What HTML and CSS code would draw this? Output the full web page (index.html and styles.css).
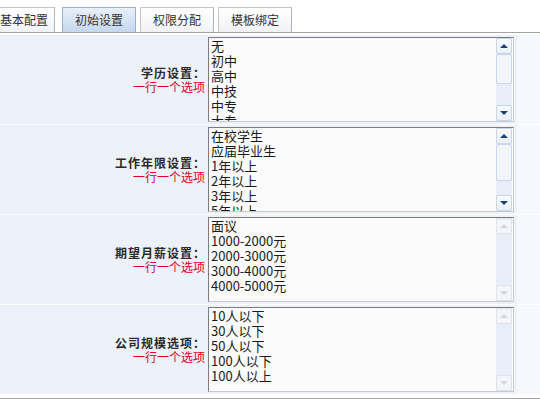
FILE: index.html
```html
<!DOCTYPE html>
<html lang="zh-CN">
<head>
<meta charset="utf-8">
<title>初始设置</title>
<link rel="stylesheet" href="styles.css">
</head>
<body>
<div class="tabs">
  <span class="tab first">基本配置</span>
  <span class="tab active">初始设置</span>
  <span class="tab">权限分配</span>
  <span class="tab">模板绑定</span>
</div>
<div class="form">
  <div class="row">
    <div class="label"><b>学历设置：</b><span class="tip">一行一个选项</span></div>
    <div class="field">
      <div class="listbox">
        <div class="items">
          <div>无</div><div>初中</div><div>高中</div><div>中技</div><div>中专</div><div>大专</div><div>本科</div><div>硕士</div><div>博士</div>
        </div>
        <div class="sb">
          <div class="btn up"></div>
          <div class="thumb t1"></div>
          <div class="track"></div>
          <div class="btn down"></div>
        </div>
      </div>
    </div>
    <div class="rest"></div>
  </div>
  <div class="row">
    <div class="label"><b>工作年限设置：</b><span class="tip">一行一个选项</span></div>
    <div class="field">
      <div class="listbox">
        <div class="items">
          <div>在校学生</div><div>应届毕业生</div><div>1年以上</div><div>2年以上</div><div>3年以上</div><div>5年以上</div><div>10年以上</div>
        </div>
        <div class="sb">
          <div class="btn up"></div>
          <div class="thumb t2"></div>
          <div class="track"></div>
          <div class="btn down"></div>
        </div>
      </div>
    </div>
    <div class="rest"></div>
  </div>
  <div class="row">
    <div class="label"><b>期望月薪设置：</b><span class="tip">一行一个选项</span></div>
    <div class="field">
      <div class="listbox">
        <div class="items">
          <div>面议</div><div>1000-2000元</div><div>2000-3000元</div><div>3000-4000元</div><div>4000-5000元</div>
        </div>
        <div class="sb off">
          <div class="btn up"></div>
          <div class="track"></div>
          <div class="btn down"></div>
        </div>
      </div>
    </div>
    <div class="rest"></div>
  </div>
  <div class="row">
    <div class="label"><b>公司规模选项：</b><span class="tip">一行一个选项</span></div>
    <div class="field">
      <div class="listbox">
        <div class="items">
          <div>10人以下</div><div>30人以下</div><div>50人以下</div><div>100人以下</div><div>100人以上</div>
        </div>
        <div class="sb off">
          <div class="btn up"></div>
          <div class="track"></div>
          <div class="btn down"></div>
        </div>
      </div>
    </div>
    <div class="rest"></div>
  </div>
</div>
<div class="bottom-line"></div>
</body>
</html>
```
FILE: styles.css
```css
html, body {
  margin: 0;
  padding: 0;
  background: #ffffff;
  font-family: "Noto Sans CJK SC", "Noto Sans", sans-serif;
  font-size: 12px;
  color: #222;
  overflow: hidden;
}

.tabs {
  display: flex;
  align-items: flex-end;
  padding-top: 7px;
  margin-left: -13px;
  border-bottom: 1px solid #a3a3a3;
  height: 25px;
}

.tab {
  box-sizing: border-box;
  height: 25px;
  line-height: 23px;
  padding: 0 12px;
  margin-right: 4px;
  border: 1px solid #c6c6c6;
  border-bottom: none;
  border-right-color: #aeb3b9;
  background: linear-gradient(#ffffff, #f1f2f4);
  color: #333;
  font-size: 12px;
  white-space: nowrap;
}

.tab.first {
  padding-right: 6px;
  margin-right: 7px;
}

.tab.active {
  background: linear-gradient(#e8f0fa, #c5d7ee);
  border-color: #97afd0;
}

.form {
  margin-top: 2px;
}

.row {
  display: grid;
  grid-template-columns: 206px 311px 1fr;
  border-bottom: 1px solid #ffffff;
  background: #edf2fa;
}

.label {
  display: flex;
  flex-direction: column;
  justify-content: center;
  align-items: flex-end;
  padding-right: 1px;
  line-height: 14px;
}

.label b {
  font-weight: bold;
  color: #2a2a2a;
  font-size: 12px;
  letter-spacing: 1px;
  margin-right: -1px;
}

.tip {
  color: #e0001b;
  font-size: 12px;
}

.field {
  padding: 2px 3px 2px 2px;
}

.rest {
  background: #f5f8fd;
}

.listbox {
  box-sizing: border-box;
  width: 306px;
  height: 85px;
  display: flex;
  border: 1px solid;
  border-color: #7c7c7c #c9c9c9 #c9c9c9 #7c7c7c;
  background: #fbfbfb;
}

.items {
  flex: 1;
  overflow: hidden;
  padding: 0 2px;
  font-size: 13px;
  line-height: 15px;
  color: #1a1a1a;
}

.sb {
  width: 16px;
  display: flex;
  flex-direction: column;
  background: #e7eef8;
  margin-right: 1px;
}

.btn {
  box-sizing: border-box;
  height: 16px;
  border: 1px solid #c9d6e8;
  border-radius: 2px;
  background: linear-gradient(#f8fafd, #e9f0f9);
  display: flex;
  align-items: center;
  justify-content: center;
}

.btn::after {
  content: "";
  width: 0;
  height: 0;
  border-left: 4px solid transparent;
  border-right: 4px solid transparent;
}

.up::after {
  border-bottom: 4px solid #1e3f73;
}

.down::after {
  border-top: 4px solid #1e3f73;
}

.thumb {
  box-sizing: border-box;
  border: 1px solid #cad7ea;
  border-radius: 2px;
  background: #f2f6fb;
}

.t1 {
  height: 30px;
}

.t2 {
  height: 37px;
}

.track {
  flex: 1;
}

.sb.off .btn {
  background: #f3f5f8;
  border-color: #dde2ea;
}

.sb.off .up::after {
  border-bottom-color: #d3d7dd;
}

.sb.off .down::after {
  border-top-color: #d3d7dd;
}

.bottom-line {
  margin-top: 3px;
  border-top: 1px solid #a3a3a3;
}
```
